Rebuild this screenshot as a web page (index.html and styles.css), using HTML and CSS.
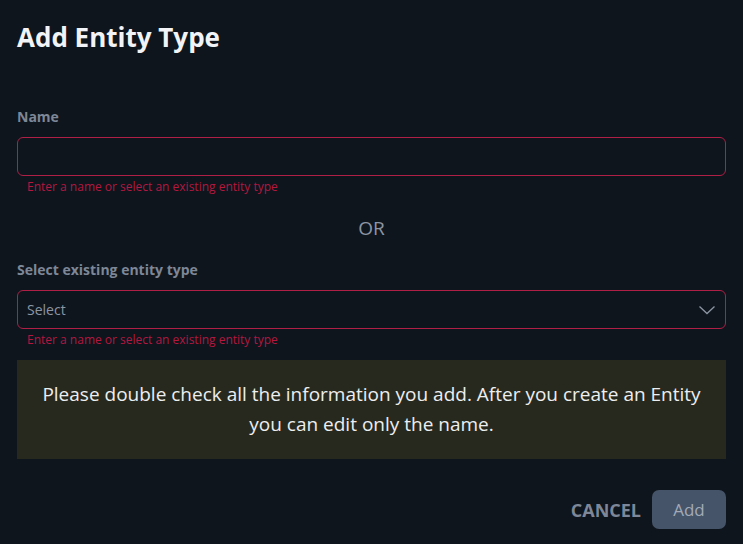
FILE: index.html
```html
<!DOCTYPE html>
<html lang="en">
<head>
<meta charset="utf-8">
<title>Add Entity Type</title>
<link rel="stylesheet" href="styles.css">
</head>
<body>
<div class="dialog">
  <h1 class="title">Add Entity Type</h1>
  <form class="form">
    <div class="field field-name">
      <label class="label" for="name">Name</label>
      <input class="input input-error" id="name" type="text">
      <div class="error">Enter a name or select an existing entity type</div>
    </div>
    <div class="or">OR</div>
    <div class="field">
      <label class="label">Select existing entity type</label>
      <div class="select input-error">
        <span class="placeholder">Select</span>
        <svg class="chevron" width="18" height="10" viewBox="0 0 18 10"><path d="M1.5 1.5 L9 8.5 L16.5 1.5" fill="none" stroke="#8c95a3" stroke-width="1.3"/></svg>
      </div>
      <div class="error">Enter a name or select an existing entity type</div>
    </div>
    <div class="notice">Please double check all the information you add. After you create an Entity you can edit only the name.</div>
    <div class="actions">
      <button type="button" class="btn-cancel">CANCEL</button>
      <button type="button" class="btn-add" disabled>Add</button>
    </div>
  </form>
</div>
</body>
</html>
```
FILE: styles.css
```css
html, body {
  margin: 0;
  padding: 0;
  background: #0e151d;
}
body {
  font-family: "Open Sans", "Noto Sans", sans-serif;
  color: #e9ecf1;
}
.dialog {
  padding: 17px 17px 0 17px;
}
.title {
  margin: 0;
  font-size: 26px;
  font-weight: 700;
  line-height: 40px;
  color: #f1f3f6;
}
.form {
  display: flex;
  flex-direction: column;
  margin-top: 51px;
}
.field {
  display: flex;
  flex-direction: column;
}
.label {
  font-size: 14px;
  font-weight: 700;
  color: #7d8797;
  line-height: 18px;
  margin-bottom: 11px;
}
.input, .select {
  box-sizing: border-box;
  height: 39px;
  width: 100%;
  background: #0e151d;
  border: 1px solid #b01f46;
  border-radius: 6px;
  outline: none;
  margin: 0;
}
.select {
  display: flex;
  align-items: center;
  justify-content: space-between;
  padding: 0 9px 0 9px;
}
.placeholder {
  font-size: 14px;
  color: #8c95a3;
}
.chevron {
  display: block;
}
.error {
  font-size: 12px;
  line-height: 16px;
  color: #b4173f;
  padding-left: 10px;
  margin-top: 3px;
}
.or {
  text-align: center;
  font-size: 19px;
  color: #8c95a3;
  line-height: 24px;
  margin: 21px 0 21px;
}
.notice {
  margin-top: 12px;
  background: #28291e;
  padding: 19px 24px 20px;
  text-align: center;
  font-size: 19px;
  line-height: 30px;
  color: #eceef0;
}
.actions {
  display: flex;
  justify-content: flex-end;
  align-items: center;
  margin-top: 31px;
  gap: 11px;
}
.btn-cancel {
  background: none;
  border: none;
  padding: 0;
  font-family: inherit;
  font-size: 18px;
  font-weight: 700;
  color: #7d8797;
}
.btn-add {
  width: 74px;
  height: 39px;
  border: none;
  border-radius: 7px;
  background: #465469;
  color: #a2aab7;
  font-family: inherit;
  font-size: 17px;
}
```
